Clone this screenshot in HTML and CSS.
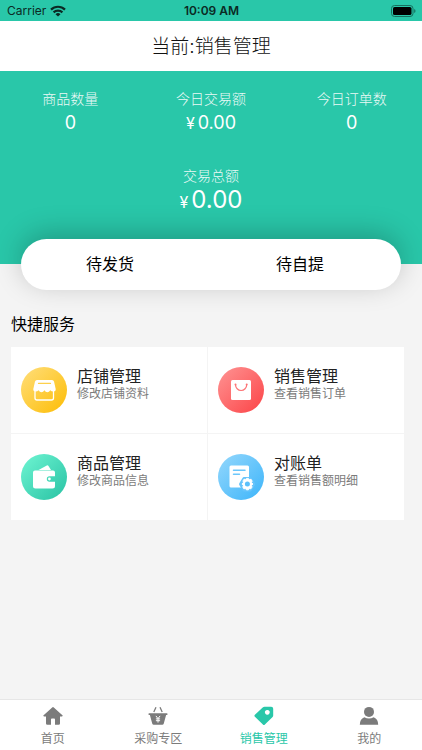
FILE: index.html
```html
<!DOCTYPE html>
<html lang="zh-CN">
<head>
<meta charset="utf-8">
<meta name="viewport" content="width=device-width, initial-scale=1">
<title>销售管理</title>
<link rel="stylesheet" href="styles.css">
</head>
<body>
<div class="statusbar">
  <div class="carrier">
    <span>Carrier</span>
    <svg width="16" height="12" viewBox="0 0 16 12" aria-hidden="true">
      <g fill="none" stroke="#0b2a24" stroke-width="2.2">
        <path d="M1 4.6a10 10 0 0 1 14 0"/>
        <path d="M3.6 7.4a6.3 6.3 0 0 1 8.8 0"/>
      </g>
      <path d="M8 11.6 5.5 9.2a3.6 3.6 0 0 1 5 0z" fill="#0b2a24"/>
    </svg>
  </div>
  <time class="clock">10:09 AM</time>
  <div class="battery">
    <svg width="25" height="12" viewBox="0 0 25 12" aria-hidden="true">
      <rect x=".5" y=".5" width="21.5" height="11" rx="3" fill="none" stroke="#17705f"/>
      <rect x="2" y="2" width="18.5" height="8" rx="1.6" fill="#000"/>
      <path d="M23.2 4v4q1.3-.6 1.3-2t-1.3-2z" fill="#17705f"/>
    </svg>
  </div>
</div>

<header class="titlebar"><h1>当前:销售管理</h1></header>

<main>
  <section class="summary">
    <dl class="stats">
      <div><dt>商品数量</dt><dd>0</dd></div>
      <div><dt>今日交易额</dt><dd><span class="yen">¥</span>0.00</dd></div>
      <div><dt>今日订单数</dt><dd>0</dd></div>
    </dl>
    <dl class="total">
      <dt>交易总额</dt><dd><span class="yen">¥</span>0.00</dd>
    </dl>
  </section>

  <div class="pending">
    <button type="button">待发货</button>
    <button type="button">待自提</button>
  </div>

  <h2>快捷服务</h2>
  <div class="services">
    <a class="service" href="#shop">
      <svg class="badge" viewBox="0 0 46 46" aria-hidden="true">
        <defs><linearGradient id="gold" x1="0" y1="0" x2="1" y2="1"><stop offset=".1" stop-color="#ffdb70"/><stop offset=".9" stop-color="#fdc010"/></linearGradient></defs>
        <circle cx="23" cy="23" r="23" fill="url(#gold)"/>
        <path d="M14 22v9a2 2 0 0 0 2 2h14.500a2 2 0 0 0 2-2v-9" fill="none" stroke="#fff" stroke-width="1.3"/>
        <path d="M16 13h15q1.5 0 2 1.5l1.700 7.500q.2 2.500-2.400 2.500-2 0-3-1.300-1.200 2-3 2t-2.900-2q-1.100 2-2.900 2t-2.900-2q-1.200 1.300-3 1.300-2.500 0-2.300-2.500l1.700-7.500q.5-1.500 2-1.500z" fill="#fff"/>
        <path d="M17.500 16.400h12" stroke="#fdd04c" stroke-width="1.200" stroke-linecap="round"/>
      </svg>
      <span class="info"><strong>店铺管理</strong><small>修改店铺资料</small></span>
    </a>
    <a class="service" href="#sales">
      <svg class="badge" viewBox="0 0 46 46" aria-hidden="true">
        <defs><linearGradient id="red" x1="0" y1="0" x2="1" y2="1"><stop offset=".1" stop-color="#fe8c8c"/><stop offset=".9" stop-color="#fc4b4e"/></linearGradient></defs>
        <circle cx="23" cy="23" r="23" fill="url(#red)"/>
        <rect x="13" y="13" width="20" height="20" rx="1.5" fill="#fff"/>
        <path d="M17.500 17.500a5.600 6 0 0 0 11.200 0" fill="none" stroke="#fd7375" stroke-width="1.200"/>
        <circle cx="17.500" cy="17.500" r="1" fill="#fd7375"/><circle cx="28.700" cy="17.500" r="1" fill="#fd7375"/>
      </svg>
      <span class="info"><strong>销售管理</strong><small>查看销售订单</small></span>
    </a>
    <a class="service" href="#goods">
      <svg class="badge" viewBox="0 0 46 46" aria-hidden="true">
        <defs><linearGradient id="mint" x1="0" y1="0" x2="1" y2="1"><stop offset=".1" stop-color="#68f0ce"/><stop offset=".9" stop-color="#2fc7a8"/></linearGradient></defs>
        <circle cx="23" cy="23" r="23" fill="url(#mint)"/>
        <path d="m17.500 16 8.300-4.500q1-.5 1.700.5l2.500 4z" fill="#fff"/>
        <path d="M14 16.500h18q2 0 2 2v3.800h-5.500a2.700 2.700 0 0 0 0 5.400H34v4.300q0 2.500-2.500 2.500h-17Q12 34.500 12 32V18.500q0-2 2-2z" fill="#fff"/>
        <circle cx="28.400" cy="25" r="1.400" fill="#fff"/>
      </svg>
      <span class="info"><strong>商品管理</strong><small>修改商品信息</small></span>
    </a>
    <a class="service" href="#statement">
      <svg class="badge" viewBox="0 0 46 46" aria-hidden="true">
        <defs><linearGradient id="sky" x1="0" y1="0" x2="1" y2="1"><stop offset=".1" stop-color="#8cd4fc"/><stop offset=".9" stop-color="#45b8fa"/></linearGradient></defs>
        <circle cx="23" cy="23" r="23" fill="url(#sky)"/>
        <path d="M13 11.500h16.500q1.500 0 1.500 1.500v20.500H13q-1.500 0-1.500-1.500V13q0-1.500 1.500-1.500z" fill="#fff"/>
        <path d="M15.500 16.200h11.500M15.500 20.200h6" stroke="#6cc7fb" stroke-width="1.500" stroke-linecap="round"/>
        <path d="m26 24.800 5.800-.1 3.600 5.300-3.300 5.700h-6l-3.300-5.500z" fill="#fff" stroke="#66c4fb" stroke-width="3.500" stroke-linejoin="round"/>
        <path d="m26 25.200 1.500.4.900-1.200h2l.9 1.300 1.800-.4 1 1.800-.6 1.500 1.400 1.400-1.400 1.400.5 1.700-1.100 1.700-1.600-.3-.9 1.300h-2l-.9-1.300-1.700.3-1-1.800.6-1.600-1.500-1.400 1.500-1.400-.4-1.700z" fill="#fff" stroke="#fff" stroke-linejoin="round"/>
        <circle cx="29.400" cy="30" r="2.500" fill="#5bc0fb"/>
      </svg>
      <span class="info"><strong>对账单</strong><small>查看销售额明细</small></span>
    </a>
  </div>
</main>

<nav class="tabs">
  <a href="#home">
    <svg viewBox="0 0 20 20" aria-hidden="true"><path d="M9.200 1.400q.8-.7 1.600 0l8.600 7.800q.8.900-.4 1.200H17v7q0 1.400-1.400 1.400H12v-5.300q0-.9-.9-.9H8.900q-.9 0-.9.900v5.300H4.400Q3 18.800 3 17.400v-7H1q-1.200-.3-.4-1.200z"/></svg>
    <span>首页</span>
  </a>
  <a href="#purchase">
    <svg viewBox="0 0 20 20" aria-hidden="true">
      <path d="M1.300 7.300h17.400q.9.200.9.900t-.9.800h-.6l-2.300 8.600q-.4 1.200-1.500 1.200H5.700q-1.100 0-1.500-1.200L1.900 9h-.6q-.9-.1-.9-.8t.9-.9z"/>
      <path class="line" d="M5.800 6 8 1.200M14.200 6 12 1.200"/>
      <path class="mark" d="m7.900 9.900 2.100 2.700 2.100-2.700M10 12.600v4M7.900 12.900h4.200M7.900 14.700h4.200"/>
    </svg>
    <span>采购专区</span>
  </a>
  <a class="active" href="#sales" aria-current="page">
    <svg viewBox="0 0 20 20" aria-hidden="true"><path fill-rule="evenodd" d="M10.500.8h6.700q2 0 2 2v6.700q0 .8-.6 1.400l-7.700 7.700q-1 1-2 0L.9 10.700q-1-1 0-2l7.800-7.300q.8-.6 1.800-.6zM13.300 3.900a2.400 2.400 0 1 0 .01 0z"/></svg>
    <span>销售管理</span>
  </a>
  <a href="#mine">
    <svg viewBox="0 0 20 20" aria-hidden="true"><circle cx="10" cy="5.900" r="5"/><path d="M5.300 11.200q4.700 2.800 9.400 0 4.500 1.800 4.500 7.600H.8q0-5.800 4.500-7.600z"/></svg>
    <span>我的</span>
  </a>
</nav>
</body>
</html>
```
FILE: styles.css
```css
:root {
  --green: #29c7a9;
  --page: #f4f4f4;
  --grey: #7b7b7b;
}

* { box-sizing: border-box; }

body {
  margin: 0;
  min-height: 100vh;
  display: flex;
  flex-direction: column;
  background: var(--page);
  color: #000;
  font-family: Inter, "Noto Sans CJK SC", sans-serif;
}

h1, h2, dl, dd { margin: 0; font-weight: 400; }
a { color: inherit; text-decoration: none; }

.statusbar {
  display: grid;
  grid-template-columns: 1fr auto 1fr;
  align-items: center;
  height: 21px;
  padding: 0 6px 0 7px;
  background: var(--green);
  color: #0b2a24;
  font-size: 12px;
}
.carrier { display: flex; align-items: center; gap: 4px; }
.clock { font-weight: 600; }
.battery { display: flex; justify-content: flex-end; }

.titlebar {
  padding-top: 2px;
  background: #fff;
  text-align: center;
}
.titlebar h1 {
  color: #111;
  font-size: 19px;
  font-weight: 300;
  line-height: 48px;
}

main { flex: 1; }

.summary {
  padding: 18px 0 48px;
  background: var(--green);
  color: #fff;
  text-align: center;
}
.stats {
  display: grid;
  grid-template-columns: repeat(3, 1fr);
  margin-bottom: 29px;
}
.summary dt {
  font-size: 14px;
  font-weight: 300;
  line-height: 20px;
  opacity: .9;
}
.summary dd { font-size: 18px; line-height: 28px; }
.summary .total dd { font-size: 24px; }
.summary .yen { margin-right: 3px; font-size: 16px; }

.pending {
  display: flex;
  position: relative;
  margin: -25px 21px 0;
  border-radius: 26px;
  background: #fff;
  box-shadow: 0 -6px 28px rgba(0, 0, 0, .22);
}
.pending button {
  flex: 1;
  padding: 0 12px 0 0;
  border: 0;
  background: none;
  color: #000;
  font: inherit;
  font-size: 16px;
  line-height: 51px;
}

h2 {
  padding: 22px 11px 11px;
  font-size: 16px;
  line-height: 24px;
}

.services {
  display: grid;
  grid-template-columns: 1fr 1fr;
  gap: 1px;
  margin: 0 18px 0 11px;
  background: var(--page);
}
.service {
  display: flex;
  gap: 10px;
  padding: 20px 10px;
  background: #fff;
}
.badge { flex: none; width: 46px; height: 46px; }
.info { display: flex; flex-direction: column; }
.info strong {
  color: #222;
  font-size: 16px;
  font-weight: 400;
  line-height: 18px;
}
.info small {
  color: var(--grey);
  font-size: 12px;
  line-height: 18px;
}

.tabs {
  display: grid;
  grid-template-columns: repeat(4, 1fr);
  border-top: 1px solid #e6e6e6;
  background: #fff;
  color: var(--grey);
}
.tabs a {
  display: flex;
  flex-direction: column;
  align-items: center;
  gap: 4px;
  padding: 6px 0 2px;
  font-size: 12px;
  line-height: 18px;
}
.tabs .active { color: var(--green); }
.tabs svg { width: 20px; height: 20px; fill: currentColor; }
.tabs .line { fill: none; stroke: currentColor; stroke-width: 1.3; }
.tabs .mark { fill: none; stroke: #fff; stroke-width: 1; }
```
